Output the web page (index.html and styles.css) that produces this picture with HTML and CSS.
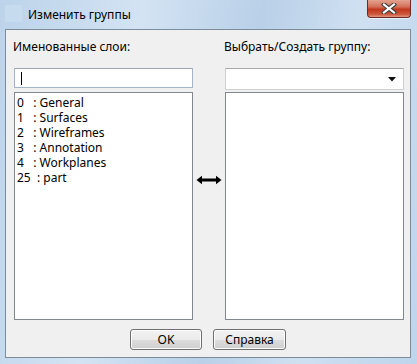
FILE: index.html
```html
<!DOCTYPE html>
<html lang="ru">
  <head>
    <meta charset="utf-8" />
    <title>Изменить группы</title>
    <link rel="stylesheet" href="styles.css">
  </head>
  <body>
    <div class="window">
      <div class="titlebar">
        <div class="app-icon"></div>
        <div class="title">Изменить группы</div>
        <div class="close">
          <svg width="16" height="11" viewBox="0 0 16 11">
            <path d="M3 1.5 L13 9.5 M13 1.5 L3 9.5" stroke="#3b3b3b" stroke-width="4.2" stroke-linecap="square"/>
            <path d="M3 1.5 L13 9.5 M13 1.5 L3 9.5" stroke="#fff" stroke-width="2.2" stroke-linecap="square"/>
          </svg>
        </div>
      </div>

      <div class="client">
        <div class="columns">
          <div class="col">
            <div class="label">Именованные слои:</div>
            <div class="textbox"><span class="caret"></span></div>
            <div class="listbox left-list">
              <div class="item">0   : General</div>
              <div class="item">1   : Surfaces</div>
              <div class="item">2   : Wireframes</div>
              <div class="item">3   : Annotation</div>
              <div class="item">4   : Workplanes</div>
              <div class="item">25  : part</div>
            </div>
          </div>

          <div class="middle">
            <svg width="26" height="10" viewBox="0 0 26 10">
              <path d="M4 5 H22" stroke="#000" stroke-width="3"/>
              <path d="M0.5 5 L6 0.8 L6 9.2 Z" fill="#000"/>
              <path d="M25.5 5 L20 0.8 L20 9.2 Z" fill="#000"/>
            </svg>
          </div>

          <div class="col">
            <div class="label">Выбрать/Создать группу:</div>
            <div class="combo">
              <svg class="drop" width="8" height="5" viewBox="0 0 8 5">
                <path d="M0 0 H8 L4 4.5 Z" fill="#111"/>
              </svg>
            </div>
            <div class="listbox right-list"></div>
          </div>
        </div>

        <div class="buttons">
          <button class="btn ok">OK</button>
          <button class="btn">Справка</button>
        </div>
      </div>
    </div>
  </body>
</html>
```

FILE: styles.css
```css
body {
  margin: 0;
  font-family: "Noto Sans", "DejaVu Sans", sans-serif;
  font-size: 12px;
  color: #000;
  background: #ffffff;
}
.window {
  width: 417px;
  height: 364px;
  box-sizing: border-box;
  padding: 0 6px 6px 5px;
  display: flex;
  flex-direction: column;
  background: linear-gradient(100deg, #bcd3ea 0%, #d3e3f3 30%, #b9d0e8 55%, #cfe0f1 75%, #bed5ec 100%);
}
.titlebar {
  height: 29px;
  display: flex;
  align-items: flex-start;
}
.app-icon {
  width: 17px;
  height: 17px;
  margin-top: 5px;
  background: #cddff0;
  opacity: 0.6;
}
.title {
  margin-left: 6px;
  margin-top: 6px;
  font-size: 12px;
  color: #000;
}
.close {
  margin-left: auto;
  width: 44px;
  height: 18px;
  box-sizing: border-box;
  border: 1px solid #6b2a22;
  border-top: none;
  border-radius: 0 0 4px 4px;
  background: linear-gradient(#e3a391 0%, #d36f58 40%, #c0371d 55%, #cf5a3f 85%, #e09a85 100%);
  display: flex;
  align-items: center;
  justify-content: center;
  box-shadow: 0 1px 0 rgba(255, 255, 255, 0.6);
}
.client {
  flex: 1;
  background: #f0f0f0;
  border: 1px solid #7d8c9b;
  display: flex;
  flex-direction: column;
  padding: 9px 6px 0 8px;
}
.columns {
  display: flex;
}
.col {
  width: 179px;
  display: flex;
  flex-direction: column;
}
.label {
  height: 15px;
  line-height: 15px;
  margin-left: -1px;
  margin-bottom: 14px;
}
.textbox {
  height: 20px;
  box-sizing: border-box;
  border: 1px solid #a3b6c9;
  border-top-color: #9aa6b4;
  background: #fff;
  padding: 3px 6px;
  margin-bottom: 4px;
}
.caret {
  display: block;
  width: 1px;
  height: 13px;
  background: #000;
}
.combo {
  height: 22px;
  box-sizing: border-box;
  border: 1px solid #d0d0d0;
  border-top-color: #a8a8a8;
  background: #fff;
  display: flex;
  align-items: center;
  justify-content: flex-end;
  padding-right: 7px;
  margin-bottom: 2px;
}
.listbox {
  height: 228px;
  box-sizing: border-box;
  border: 1px solid #828790;
  background: #fff;
  padding: 2px 2px;
}
.item {
  height: 15px;
  line-height: 15px;
  white-space: pre;
}
.middle {
  width: 32px;
  display: flex;
  justify-content: center;
  align-items: center;
}
.buttons {
  display: flex;
  justify-content: center;
  gap: 11px;
  margin-top: 9px;
  margin-left: -2px;
}
.btn {
  width: 73px;
  height: 21px;
  padding: 0;
  font-family: "Noto Sans", "DejaVu Sans", sans-serif;
  font-size: 12px;
  color: #000;
  border: 1px solid #707070;
  border-radius: 3px;
  background: linear-gradient(#f2f2f2 0%, #ebebeb 50%, #dddddd 51%, #cfcfcf 100%);
  box-shadow: inset 0 0 0 1px #fcfcfc;
}
.ok {
  width: 72px;
}
```
